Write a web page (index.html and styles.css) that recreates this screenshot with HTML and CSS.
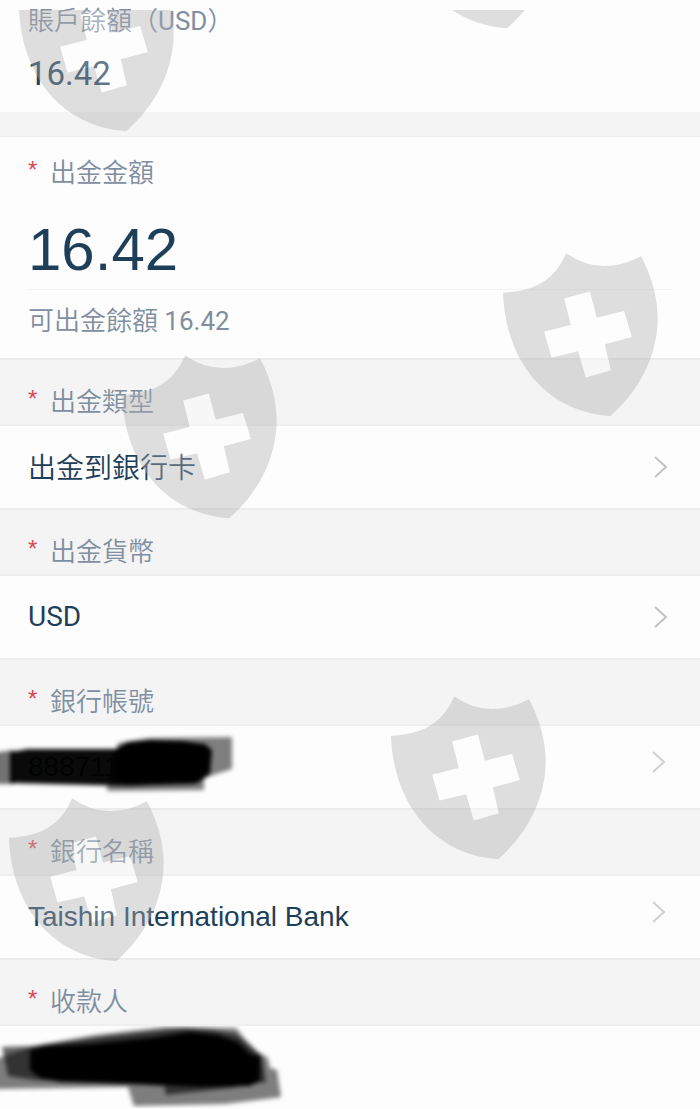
FILE: index.html
```html
<!DOCTYPE html>
<html lang="zh-Hant">
<head>
<meta charset="utf-8">
<meta name="viewport" content="width=device-width, initial-scale=1">
<title>出金</title>
<link rel="stylesheet" href="styles.css">
</head>
<body>
<svg class="defs" aria-hidden="true">
  <defs>
    <symbol id="shield" viewBox="38 38 466 492">
      <path fill="#afafaf" fill-opacity=".4" fill-rule="evenodd" d="M38 157C128 152 190 125 228 38Q330 111 453 47C487 111 503 175 503 235C502 350 445 455 360 528C165 515 45 360 38 157ZM222 174L242 254L162 274L184 352L264 333L287 412L362 390L344 312L425 290L402 212L320 232L299 153Z"/>
      <path fill="#fff" fill-opacity=".3" d="M222 174L242 254L162 274L184 352L264 333L287 412L362 390L344 312L425 290L402 212L320 232L299 153Z"/>
    </symbol>
    <symbol id="chevron" viewBox="0 0 14 24">
      <path fill="none" stroke="currentColor" stroke-width="2" d="M1 2L12 12L1 22"/>
    </symbol>
  </defs>
</svg>
<main class="page">
  <section class="balance">
    <h2 class="caption">賬戶餘額（<span class="latin">USD</span>）</h2>
    <p class="balance-value">16.42</p>
  </section>

  <form class="form">
    <section class="amount">
      <label class="field-label" for="amount"><span class="star">*</span>出金金額</label>
      <input class="amount-input" id="amount" type="text" inputmode="decimal" value="16.42">
      <p class="caption">可出金餘額 <span class="latin">16.42</span></p>
    </section>

    <div class="field-label field-head" id="type-label"><span class="star">*</span>出金類型</div>
    <button class="row" type="button" aria-describedby="type-label">
      <span class="row-value row-value-cjk">出金到銀行卡</span>
      <svg class="chevron"><use href="#chevron"/></svg>
    </button>

    <div class="field-label field-head" id="currency-label"><span class="star">*</span>出金貨幣</div>
    <button class="row" type="button" aria-describedby="currency-label">
      <span class="row-value">USD</span>
      <svg class="chevron"><use href="#chevron"/></svg>
    </button>

    <label class="field-label field-head" for="account"><span class="star">*</span>銀行帳號</label>
    <div class="row">
      <input class="row-input" id="account" type="text" value="888711">
      <svg class="chevron chevron-soft"><use href="#chevron"/></svg>
      <svg class="scribble" viewBox="0 0 290 82" aria-hidden="true">
        <g class="ink">
          <path opacity=".55" d="M-8 27L14 24V58H-8Z"/>
          <path opacity=".5" d="M118 17L130 15L150 12L232 11V43L216 48L204 52V64L107 65L108 54Z"/>
          <path opacity=".96" d="M10 26L28 23L116 23L128 16L150 14L182 15L205 18L212 24L210 48L198 57L130 60L10 57Z"/>
          <path d="M114 24L128 17L182 15L207 20L211 28L208 49L194 58L134 59L114 54Z"/>
        </g>
      </svg>
    </div>

    <div class="field-label field-head" id="bank-label"><span class="star">*</span>銀行名稱</div>
    <button class="row" type="button" aria-describedby="bank-label">
      <span class="row-value row-value-latin">Taishin International Bank</span>
      <svg class="chevron chevron-soft"><use href="#chevron"/></svg>
    </button>

    <label class="field-label field-head" for="payee"><span class="star">*</span>收款人</label>
    <div class="row">
      <input class="row-input" id="payee" type="text">
      <svg class="scribble" viewBox="0 0 290 82" aria-hidden="true">
        <g class="ink">
          <path opacity=".5" d="M-8 34L34 20L95 9L165 1L236 2L246 14L258 26L268 32L270 42L277 44L281 71L225 78L134 80L128 61L-8 63Z"/>
          <path opacity=".6" d="M2 21L34 20L110 10L185 2L212 4L236 8L252 22L262 30L266 56L230 62L166 69L164 60L34 54L8 50Z"/>
          <path d="M30 24L45 20L90 18L150 12L190 6L218 9L238 16L250 28L260 30L260 54L250 60L200 61L140 58L60 56L40 52L30 44Z"/>
        </g>
      </svg>
    </div>
  </form>

  <div class="watermarks" aria-hidden="true">
    <svg class="mark mark-1"><use href="#shield"/></svg>
    <svg class="mark mark-2"><use href="#shield"/></svg>
    <svg class="mark mark-3"><use href="#shield"/></svg>
    <svg class="mark mark-4"><use href="#shield"/></svg>
    <svg class="mark mark-5"><use href="#shield"/></svg>
    <svg class="mark mark-6"><use href="#shield"/></svg>
  </div>
</main>
</body>
</html>
```
FILE: styles.css
```css
* {
  box-sizing: border-box;
}

body {
  margin: 0;
  background: #fdfdfd;
  color: #1d3f5a;
  font-family: Roboto, "Noto Sans CJK TC", sans-serif;
}

h2,
p {
  margin: 0;
}

button,
input {
  margin: 0;
  border: 0;
  background: none;
  color: inherit;
  font: inherit;
}

.defs {
  position: absolute;
  width: 0;
  height: 0;
}

.page {
  position: relative;
  overflow: hidden;
}

.balance {
  height: 112px;
  padding: 4px 28px 0;
}

.caption,
.field-label {
  color: #7f8ea0;
  font-size: 26px;
  font-weight: 350;
  line-height: 34px;
}

.latin {
  font-weight: 400;
}

.balance-value {
  margin-top: 16px;
  font-size: 33px;
  line-height: 40px;
}

.form {
  border-top: 24px solid #f4f4f4;
}

.amount {
  padding: 19px 28px 20px;
  border-top: 1px solid #ececec;
}

.field-label {
  display: flex;
}

.star {
  width: 22px;
  color: #dc4654;
  font-family: "Liberation Sans", sans-serif;
  font-size: 24px;
  font-weight: 400;
  line-height: 28px;
}

.amount-input {
  display: block;
  width: 100%;
  height: 100px;
  margin-bottom: 14px;
  padding: 20px 0 0;
  border-bottom: 1px solid #f4f4f4;
  font-family: "Liberation Sans", sans-serif;
  font-size: 60px;
}

.field-head {
  height: 68px;
  padding: 25px 28px 0;
  border-top: 2px solid #ececec;
  border-bottom: 2px solid #efefef;
  background: #f4f4f4;
}

.row {
  position: relative;
  display: flex;
  align-items: center;
  justify-content: space-between;
  width: 100%;
  height: 82px;
  padding: 0 32px 0 28px;
  text-align: left;
}

.row-value,
.row-input {
  font-size: 28px;
  line-height: 36px;
}

.row-value-cjk {
  padding-top: 4px;
  font-weight: 350;
}

.row-value-latin,
.row-input {
  font-family: "Liberation Sans", sans-serif;
}

.row-input {
  flex: 1;
  min-width: 0;
  padding: 0;
}

.chevron {
  flex: none;
  width: 14px;
  height: 24px;
  color: #c2c2c2;
}

.chevron-soft {
  margin: 0 2px 10px 0;
  color: #d0d0d0;
}

.scribble {
  position: absolute;
  top: 0;
  left: 0;
  width: 290px;
  height: 82px;
  pointer-events: none;
}

.ink {
  filter: blur(2px);
}

.watermarks {
  position: absolute;
  inset: 10px 0 0;
  overflow: hidden;
  pointer-events: none;
}

.mark {
  position: absolute;
  width: 155px;
  height: 164px;
}

.mark-1 {
  top: -42px;
  left: 19px;
}

.mark-2 {
  top: -145px;
  left: 400px;
}

.mark-3 {
  top: 243px;
  left: 503px;
}

.mark-4 {
  top: 345px;
  left: 122px;
}

.mark-5 {
  top: 686px;
  left: 391px;
}

.mark-6 {
  top: 788px;
  left: 9px;
}
```
